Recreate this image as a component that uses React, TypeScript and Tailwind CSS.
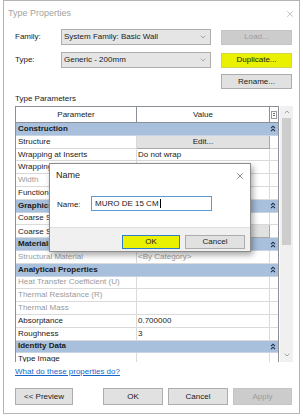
import { ChevronDown, ChevronUp, X } from "lucide-react";

type Row =
  | { kind: "section"; label: string }
  | {
      kind: "param";
      label: string;
      value?: string;
      dim?: boolean;
      dimValue?: boolean;
      button?: boolean;
    };

// property grid content, top to bottom
const rows: Row[] = [
  { kind: "section", label: "Construction" },
  { kind: "param", label: "Structure", value: "Edit...", button: true },
  { kind: "param", label: "Wrapping at Inserts", value: "Do not wrap" },
  { kind: "param", label: "Wrapping at Ends", value: "None" },
  { kind: "param", label: "Width", value: "200.0", dim: true, dimValue: true },
  { kind: "param", label: "Function", value: "Exterior" },
  { kind: "section", label: "Graphics" },
  { kind: "param", label: "Coarse Scale Fill Pattern", value: "" },
  { kind: "param", label: "Coarse Scale Fill Color", value: "Black", button: true },
  { kind: "section", label: "Materials and Finishes" },
  { kind: "param", label: "Structural Material", value: "<By Category>", dim: true, dimValue: true },
  { kind: "section", label: "Analytical Properties" },
  { kind: "param", label: "Heat Transfer Coefficient (U)", dim: true },
  { kind: "param", label: "Thermal Resistance (R)", dim: true },
  { kind: "param", label: "Thermal Mass", dim: true },
  { kind: "param", label: "Absorptance", value: "0.700000" },
  { kind: "param", label: "Roughness", value: "3" },
  { kind: "section", label: "Identity Data" },
  { kind: "param", label: "Type Image" },
];

function Collapse() {
  return (
    <svg width="6" height="7" viewBox="0 0 6 7" className="text-[#1c2b4a]">
      <path d="M1 3.2 L3 1.2 L5 3.2" fill="none" stroke="currentColor" strokeWidth="1.1" />
      <path d="M1 6.2 L3 4.2 L5 6.2" fill="none" stroke="currentColor" strokeWidth="1.1" />
    </svg>
  );
}

function Combo({ value }: { value: string }) {
  return (
    <div className="flex h-[16px] w-[150px] items-center justify-between border border-[#adadad] bg-[#e5e5e5] pl-[2px] pr-[3px]">
      <span>{value}</span>
      <ChevronDown className="h-[8px] w-[8px] text-[#707070]" strokeWidth={1.6} />
    </div>
  );
}

function Btn({
  children,
  className = "",
}: {
  children: React.ReactNode;
  className?: string;
}) {
  return (
    <div className={`flex items-center justify-center border ${className}`}>
      {children}
    </div>
  );
}

export default function App() {
  return (
    <div className="relative h-[416px] w-[303px] overflow-hidden bg-white font-['Liberation_Sans',Arial,sans-serif] text-[8px] text-[#1a1a1a]">
      {/* Type Properties window */}
      <div className="ml-[3px] flex h-[414px] w-[297px] flex-col border border-[#b4b4b4] bg-white">
        <div className="flex h-[26px] shrink-0 items-center justify-between pl-[4px] pr-[4px]">
          <span className="text-[9px] text-[#a3a3a3]">Type Properties</span>
          <X className="h-[10px] w-[10px] text-[#8a8a8a]" strokeWidth={1.2} />
        </div>

        <div className="flex flex-col pl-[11px]">
          <div className="mt-[2px] flex items-center">
            <span className="w-[46px]">Family:</span>
            <Combo value="System Family: Basic Wall" />
            <Btn className="ml-[10px] h-[15px] w-[71px] border-[#c4c4c4] bg-[#cccccc] text-[#9c9c9c]">
              Load...
            </Btn>
          </div>

          <div className="mt-[7px] flex items-center">
            <span className="w-[46px]">Type:</span>
            <Combo value="Generic - 200mm" />
            <Btn className="ml-[10px] h-[15px] w-[71px] border-[#d2d84a] bg-[#e9f000]">
              Duplicate...
            </Btn>
          </div>

          <Btn className="ml-[206px] mt-[6px] h-[15px] w-[71px] border-[#adadad] bg-[#e1e1e1]">
            Rename...
          </Btn>

          <span className="mt-[4px] h-[11px] leading-[11px]">Type Parameters</span>

          <div className="mt-[2px] flex h-[256px] gap-[1px]">
            {/* property grid */}
            <div className="flex h-full w-[264px] flex-col overflow-hidden border-x border-t border-[#8a8f98] bg-white">
              <div className="grid h-[16px] shrink-0 grid-cols-[121px_133px_8px] border-b border-[#8a8f98]">
                <div className="flex items-center justify-center border-r border-[#8a8f98]">Parameter</div>
                <div className="flex items-center justify-center border-r border-[#8a8f98]">Value</div>
                <div className="flex items-center justify-center">
                  <div className="flex h-[8px] w-[6px] flex-col justify-center gap-[1px] border border-[#9a9a9a] px-[1px]">
                    <div className="h-px bg-[#6a6a6a]" />
                    <div className="h-px bg-[#6a6a6a]" />
                  </div>
                </div>
              </div>
              {rows.map((r, i) =>
                r.kind === "section" ? (
                  <div
                    key={i}
                    className="flex h-[12.8px] shrink-0 items-center justify-between border-b border-[#c8d4e3] bg-[#a8c0dc] pl-[2px] pr-[2px] font-bold"
                  >
                    <span>{r.label}</span>
                    <Collapse />
                  </div>
                ) : (
                  <div
                    key={i}
                    className="grid h-[12.8px] shrink-0 grid-cols-[121px_133px_8px] border-b border-[#dadada]"
                  >
                    <div
                      className={`flex items-center overflow-hidden whitespace-nowrap border-r border-[#dadada] pl-[2px] ${r.dim ? "text-[#9b9b9b]" : ""}`}
                    >
                      {r.label}
                    </div>
                    {r.button ? (
                      <div className="flex items-center justify-center border-b border-r border-[#a8a8a8] bg-[#e1e1e1]">
                        {r.value}
                      </div>
                    ) : (
                      <div
                        className={`flex items-center border-r border-[#dadada] pl-[1px] ${r.dimValue ? "text-[#9b9b9b]" : ""}`}
                      >
                        {r.value}
                      </div>
                    )}
                    <div />
                  </div>
                )
              )}
            </div>

            {/* scrollbar */}
            <div className="flex h-full w-[13px] flex-col items-center bg-[#f0f0f0]">
              <div className="flex h-[12px] items-center">
                <ChevronUp className="h-[8px] w-[8px] text-[#606060]" strokeWidth={1.6} />
              </div>
              <div className="h-[127px] w-[9px] bg-[#cdcdcd]" />
              <div className="flex-1" />
              <div className="flex h-[14px] items-center">
                <ChevronDown className="h-[8px] w-[8px] text-[#606060]" strokeWidth={1.6} />
              </div>
            </div>
          </div>

          <span className="mt-[5px] h-[10px] leading-[10px] text-[#1565c8] underline">
            What do these properties do?
          </span>

          <div className="mt-[11px] flex h-[17px] items-stretch">
            <Btn className="w-[58px] border-[#adadad] bg-[#e1e1e1]">&lt;&lt; Preview</Btn>
            <Btn className="ml-[30px] w-[60px] border-[#adadad] bg-[#e1e1e1]">OK</Btn>
            <Btn className="ml-[5px] w-[60px] border-[#adadad] bg-[#e1e1e1]">Cancel</Btn>
            <Btn className="ml-[5px] w-[59px] border-[#c4c4c4] bg-[#cccccc] text-[#9c9c9c]">Apply</Btn>
          </div>
        </div>
      </div>

      {/* Name dialog on top */}
      <div className="absolute left-[49px] top-[163px] flex h-[89px] w-[202px] flex-col border border-[#8c8c8c] bg-white shadow-[2px_3px_6px_rgba(0,0,0,0.35)]">
        <div className="flex h-[23px] shrink-0 items-center justify-between pl-[6px] pr-[5px]">
          <span className="text-[9px]">Name</span>
          <X className="h-[10px] w-[10px] text-[#333]" strokeWidth={1.3} />
        </div>
        <div className="flex h-[40px] shrink-0 items-start pl-[7px] pt-[9px]">
          <span className="mt-[3px] w-[34px]">Name:</span>
          <div className="flex h-[15px] w-[121px] items-center border border-[#5b9bd5] bg-white pl-[3px]">
            <span>MURO DE 15 CM</span>
            <span className="ml-[1px] h-[9px] w-px bg-black" />
          </div>
        </div>
        <div className="flex flex-1 items-start justify-end gap-[5px] border-t border-[#dfdfdf] bg-[#f0f0f0] pr-[5px] pt-[7px]">
          <Btn className="h-[14px] w-[58px] border-[#2f7fc6] bg-[#e9f000]">OK</Btn>
          <Btn className="h-[14px] w-[60px] border-[#adadad] bg-[#e1e1e1]">Cancel</Btn>
        </div>
      </div>
    </div>
  );
}
